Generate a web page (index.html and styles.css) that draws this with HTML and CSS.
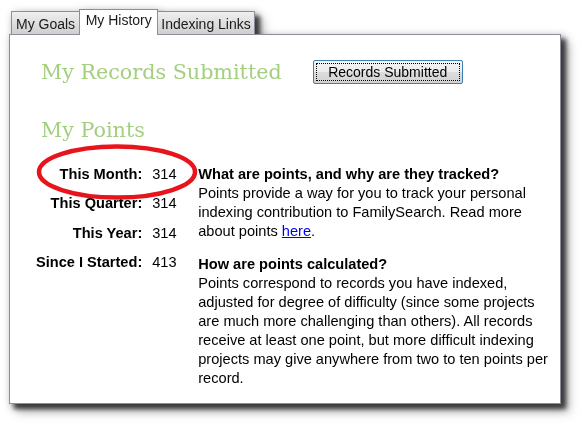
FILE: index.html
```html
<!DOCTYPE html>
<html>
<head>
<meta charset="utf-8">
<link rel="stylesheet" href="styles.css">
</head>
<body>
<div class="widget">
  <div class="tabs">
    <div class="tab">My Goals</div>
    <div class="tab active">My History</div>
    <div class="tab last">Indexing Links</div>
  </div>
  <div class="panel">
    <div class="records">
      <h2 class="heading">My Records Submitted</h2>
      <button class="btn"><span class="btn-inner">Records Submitted</span></button>
    </div>
    <h2 class="heading points-title">My Points</h2>
    <div class="points">
      <div class="stats">
        <div class="label">This Month:</div><div class="value">314</div>
        <div class="label">This Quarter:</div><div class="value">314</div>
        <div class="label">This Year:</div><div class="value">314</div>
        <div class="label">Since I Started:</div><div class="value">413</div>
      </div>
      <div class="info">
        <p><b>What are points, and why are they tracked?</b><br>Points provide a way for you to track your personal indexing contribution to FamilySearch. Read more about points <a href="#">here</a>.</p>
        <p><b>How are points calculated?</b><br>Points correspond to records you have indexed, adjusted for degree of difficulty (since some projects are much more challenging than others). All records receive at least one point, but more difficult indexing projects may give anywhere from two to ten points per record.</p>
      </div>
    </div>
    <svg class="circle" width="166" height="58" viewBox="0 0 166 58"><ellipse cx="81" cy="28" rx="78" ry="25.5" fill="none" stroke="#e8141c" stroke-width="4.5"/></svg>
  </div>
</div>
</body>
</html>
```

FILE: styles.css
```css
html, body {
  margin: 0;
  background: #fff;
}
body {
  box-sizing: border-box;
  min-height: 427px;
  padding: 9px 0 0 9px;
  font-family: "Liberation Sans", Arial, sans-serif;
  font-size: 14.6px;
  color: #000;
}
.widget {
  width: 552px;
  filter: drop-shadow(5px 5px 2px rgba(0,0,0,0.6)) drop-shadow(3px 3px 4px rgba(0,0,0,0.5));
}
.tabs {
  display: flex;
  align-items: flex-end;
  padding-left: 2px;
  position: relative;
  z-index: 2;
  font-size: 14px;
}
.tab {
  box-sizing: border-box;
  height: 23px;
  padding: 3px 4px 0;
  border: 1px solid #8e8e98;
  border-bottom: none;
  background: linear-gradient(#efefef, #cfcfcf);
  color: #1a1a1a;
  line-height: 19px;
  white-space: nowrap;
}
.tab + .tab { margin-left: -1px; }
.tab.active {
  height: 26px;
  padding: 1px 5.5px 0;
  background: #fff;
  margin-bottom: -1px;
  position: relative;
  z-index: 3;
}
.tab.last {
  padding-left: 3px;
  padding-right: 3px;
}
.panel {
  position: relative;
  box-sizing: border-box;
  height: 370px;
  border: 1px solid #8e8e98;
  background: #fff;
  padding: 23px 0 0 31px;
}
.records {
  display: flex;
  align-items: center;
  gap: 31px;
}
.heading {
  margin: 0;
  font-family: "DejaVu Serif", serif;
  font-weight: normal;
  font-size: 20.7px;
  color: #a3cf7f;
  line-height: 28px;
}
.btn {
  box-sizing: border-box;
  width: 150px;
  height: 24px;
  padding: 2px;
  border: 1px solid #3c7fb1;
  border-radius: 2px;
  background: linear-gradient(#f4f4f4 0%, #ececec 50%, #dcdcdc 51%, #d2d2d2 100%);
  font-family: "Liberation Sans", Arial, sans-serif;
  font-size: 14px;
  color: #000;
}
.btn-inner {
  display: block;
  height: 18px;
  line-height: 17px;
  box-sizing: border-box;
  border: 1px dotted #000;
}
.points-title {
  margin-top: 30px;
}
.points {
  display: flex;
  margin-top: 21px;
  margin-left: -5px;
}
.stats {
  display: grid;
  grid-template-columns: max-content 38px;
  column-gap: 10px;
  row-gap: 10.3px;
  align-content: start;
  line-height: 19px;
}
.label {
  font-weight: bold;
  text-align: right;
}
.info {
  width: 350px;
  margin-left: 8px;
  line-height: 19px;
}
.info p { margin: 0 0 14px; }
.info a { color: #0000ee; }
.circle {
  position: absolute;
  left: 26px;
  top: 109px;
}
```
